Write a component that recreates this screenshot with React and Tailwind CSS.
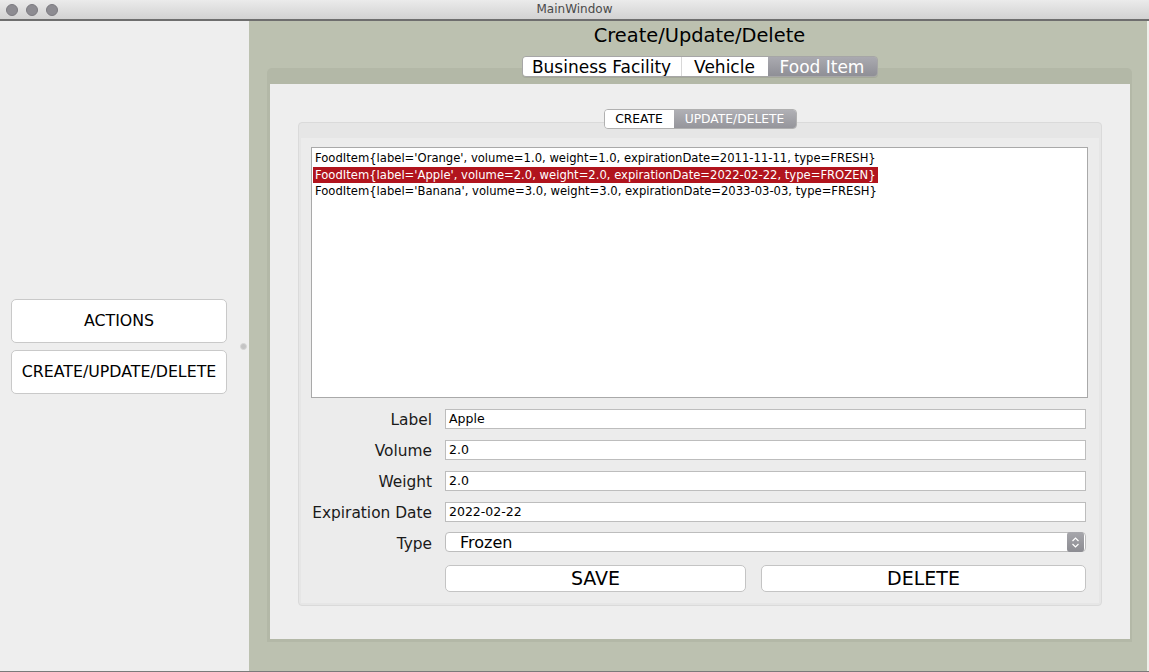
import React from "react";

const font = { fontFamily: '"DejaVu Sans", "Open Sans", Arial, sans-serif' };

function TrafficLight() {
  return <div className="w-[12px] h-[12px] rounded-full bg-[#8d8c92] border border-[#7b7a80]" />;
}

function Field({ value }) {
  return (
    <div className="h-[20px] bg-white border border-[#bdbdbd] flex items-center px-[3px] text-[12.5px] text-black">
      {value}
    </div>
  );
}

function Label({ children }) {
  return <div className="h-[20px] flex items-center justify-end pt-[3px] text-[15.4px] text-[#1a1a1a]">{children}</div>;
}

export default function App() {
  const rows = [
    "FoodItem{label='Orange', volume=1.0, weight=1.0, expirationDate=2011-11-11, type=FRESH}",
    "FoodItem{label='Apple', volume=2.0, weight=2.0, expirationDate=2022-02-22, type=FROZEN}",
    "FoodItem{label='Banana', volume=3.0, weight=3.0, expirationDate=2033-03-03, type=FRESH}",
  ];
  return (
    <div className="w-[1149px] h-[672px] flex flex-col overflow-hidden bg-[#eeeeee]" style={font}>
      {/* Title bar */}
      <div className="h-[21px] shrink-0 flex items-center relative bg-gradient-to-b from-[#ebebeb] to-[#d2d2d2] border-b-[2px] border-[#6e6e6e]">
        <div className="flex gap-[8px] pl-[6px]">
          <TrafficLight />
          <TrafficLight />
          <TrafficLight />
        </div>
        <div className="absolute inset-0 flex items-center justify-center text-[12px] text-[#4a4a4a] pb-[1px]">MainWindow</div>
      </div>

      <div className="flex-1 flex min-h-0 border-b border-[#7a7a7a]">
        {/* Left panel */}
        <div className="w-[237px] shrink-0 flex flex-col justify-center gap-[7px] pl-[11px] pr-[10px]">
          <div className="h-[44px] bg-white border border-[#c9c9c9] rounded-[5px] flex items-center justify-center text-[15.8px] text-black">
            ACTIONS
          </div>
          <div className="h-[44px] bg-white border border-[#c9c9c9] rounded-[5px] flex items-center justify-center text-[15.8px] text-black">
            CREATE/UPDATE/DELETE
          </div>
        </div>
        {/* Splitter */}
        <div className="w-[12px] shrink-0 flex items-center justify-center">
          <div className="w-[7px] h-[7px] rounded-full bg-[#c4c4c4] border border-[#d6d6d6] mt-[1px]" />
        </div>

        {/* Right pane */}
        <div className="flex-1 bg-[#bcc1b0] flex flex-col border-r-[2px] border-[#eef0ea] pl-[18px] pr-[15px]">
          <div className="h-[28px] mt-[1px] flex items-center justify-center text-[19.4px] text-black leading-none">
            Create/Update/Delete
          </div>
          {/* Top tabs */}
          <div className="relative z-10 flex justify-center mt-[6px] h-[21px]">
            <div className="flex h-[21px] rounded-[4px] border border-[#a6a6a6] overflow-hidden text-[17px] leading-none shadow-[0_1px_0_rgba(0,0,0,0.08)]">
              <div className="w-[159px] bg-white flex items-center justify-center pt-[1px] text-black border-r border-[#d8d8d8]">Business Facility</div>
              <div className="w-[86px] bg-white flex items-center justify-center pt-[1px] text-black">Vehicle</div>
              <div className="w-[109px] bg-gradient-to-b from-[#aaaab0] to-[#8f8f96] flex items-center justify-center pt-[1px] text-white">Food Item</div>
            </div>
          </div>
          {/* Tab frame */}
          <div className="-mt-[9px] h-[574px] bg-[#b3b8a7] rounded-t-[5px] pt-[16px] pl-[3px] pr-[2px] pb-[3px] flex">
            <div className="flex-1 bg-[#eeeeee] flex flex-col px-[28px] pt-[25px]">
              {/* inner tabs */}
              <div className="relative z-10 flex justify-center h-[20px]">
                <div className="flex h-[20px] rounded-[4px] border border-[#b0b0b0] overflow-hidden text-[12.3px] leading-none">
                  <div className="w-[69px] bg-white flex items-center justify-center text-black">CREATE</div>
                  <div className="w-[122px] bg-gradient-to-b from-[#b0b0b5] to-[#95959b] flex items-center justify-center text-white">UPDATE/DELETE</div>
                </div>
              </div>
              {/* group box */}
              <div className="-mt-[7px] h-[484px] bg-[#e6e6e6] border border-[#dadada] rounded-[4px] pt-[15px] px-[2px] pb-[2px] flex">
                <div className="flex-1 bg-[#ececec] flex flex-col pl-[10px] pr-[11px] pt-[9px]">
                  {/* list */}
                  <div className="h-[251px] bg-white border border-[#a9a9a9] pt-[2px] pl-[1px] text-[11.6px] leading-[16.5px] text-black">
                    {rows.map((r, i) => (
                      <div key={i} className="flex">
                        <span className={i === 1 ? "bg-[#b1141d] text-white px-[2px]" : "px-[2px]"}>{r}</span>
                      </div>
                    ))}
                  </div>
                  {/* form */}
                  <div className="grid grid-cols-[121px_1fr] gap-x-[13px] gap-y-[11px] mt-[11px] pr-[2px]">
                    <Label>Label</Label>
                    <Field value="Apple" />
                    <Label>Volume</Label>
                    <Field value="2.0" />
                    <Label>Weight</Label>
                    <Field value="2.0" />
                    <Label>Expiration Date</Label>
                    <Field value="2022-02-22" />
                    <Label>Type</Label>
                    <div className="h-[20px] -mt-[1px] bg-white border border-[#bdbdbd] rounded-[4px] flex items-center pl-[14px] pt-[1px] text-[16px] text-black relative">
                      Frozen
                      <div className="absolute right-[1px] top-[-1px] bottom-[-1px] w-[17px] rounded-[3px] bg-gradient-to-b from-[#a7a7ac] to-[#8c8c92] flex items-center justify-center">
                        <svg width="9" height="13" viewBox="0 0 9 13" fill="none" stroke="white" strokeWidth="1.2">
                          <path d="M1.5 5 L4.5 2 L7.5 5" />
                          <path d="M1.5 8 L4.5 11 L7.5 8" />
                        </svg>
                      </div>
                    </div>
                    <div />
                    <div className="flex gap-[15px] mt-[1px]">
                      <div className="w-[301px] h-[27px] bg-white border border-[#c4c4c4] rounded-[5px] flex items-center justify-center text-[19px] text-black">SAVE</div>
                      <div className="flex-1 h-[27px] bg-white border border-[#c4c4c4] rounded-[5px] flex items-center justify-center text-[19px] text-black">DELETE</div>
                    </div>
                  </div>
                </div>
              </div>
            </div>
          </div>
        </div>
      </div>
    </div>
  );
}
